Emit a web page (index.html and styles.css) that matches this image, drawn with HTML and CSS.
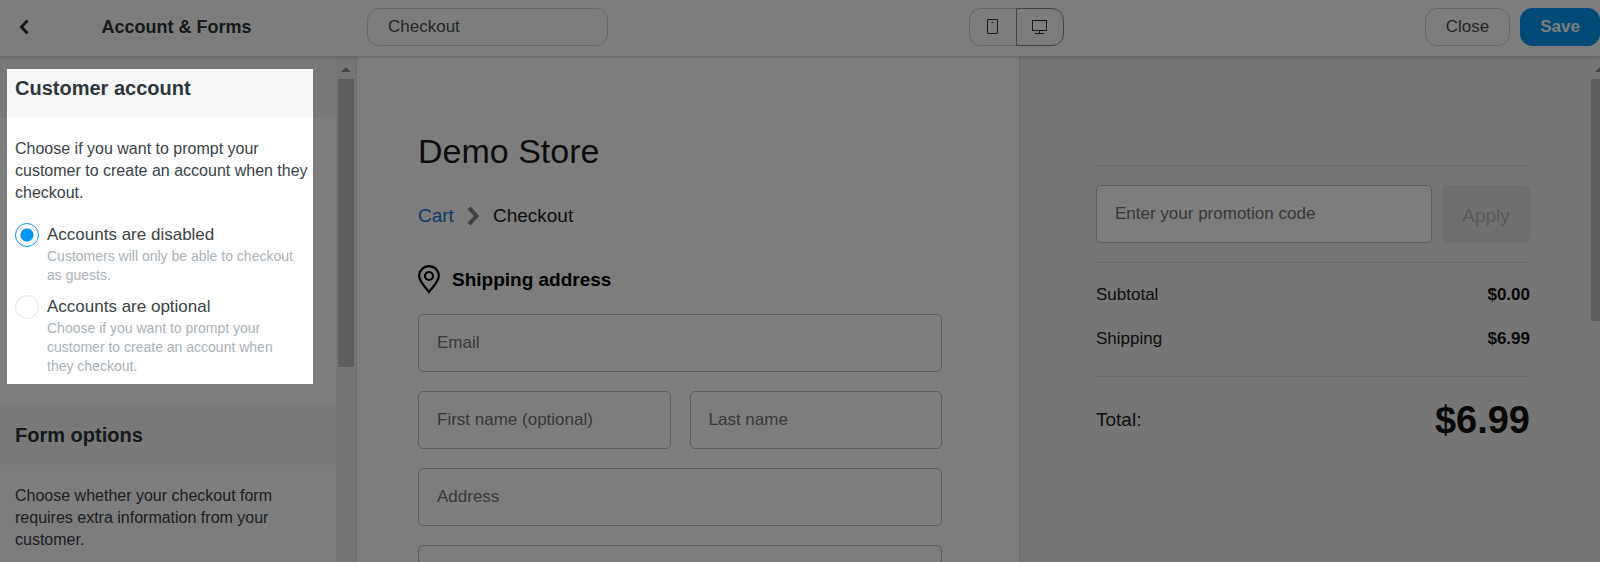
FILE: index.html
```html
<!DOCTYPE html>
<html lang="en">
<head>
<meta charset="utf-8">
<title>Account &amp; Forms</title>
<link rel="stylesheet" href="styles.css">
</head>
<body>
<div class="app">
  <header class="topbar">
    <div class="topbar-nav">
      <button class="back" type="button" aria-label="Back">
        <svg width="10" height="16" viewBox="0 0 10 16" fill="none" stroke="currentColor" stroke-width="3"><path d="M8.500 1.500 2.500 8l6 6.500"/></svg>
      </button>
      <h1 class="topbar-title">Account &amp; Forms</h1>
    </div>
    <div class="topbar-tools">
      <input class="page-name" type="text" value="Checkout" aria-label="Page">
      <div class="devices">
        <button class="device" type="button" aria-label="Mobile">
          <svg width="12" height="16" viewBox="0 0 12 16" fill="none" stroke="currentColor"><rect x="0.500" y="0.500" width="10" height="14" rx="0.500"/><path d="M4.500 3.500h2"/></svg>
        </button>
        <button class="device device-active" type="button" aria-label="Desktop">
          <svg width="16" height="16" viewBox="0 0 16 16" fill="none" stroke="currentColor"><rect x="0.500" y="1.500" width="14" height="10"/><path d="M7.500 12v2M3 14.500h9"/></svg>
        </button>
      </div>
      <div class="actions">
        <button class="btn btn-close" type="button">Close</button>
        <button class="btn btn-save" type="button">Save</button>
      </div>
    </div>
  </header>

  <div class="workspace">
    <aside class="sidebar">
      <div class="settings">
        <h2 class="section-title">Customer account</h2>
        <div class="section-body">
          <p class="lead">Choose if you want to prompt your customer to create an account when they checkout.</p>
          <div class="option">
            <input class="radio" type="radio" name="accounts" id="acc-disabled" checked>
            <div>
              <label class="option-label" for="acc-disabled">Accounts are disabled</label>
              <p class="hint">Customers will only be able to checkout as guests.</p>
            </div>
          </div>
          <div class="option">
            <input class="radio" type="radio" name="accounts" id="acc-optional">
            <div>
              <label class="option-label" for="acc-optional">Accounts are optional</label>
              <p class="hint">Choose if you want to prompt your customer to create an account when they checkout.</p>
            </div>
          </div>
        </div>
        <h2 class="section-title">Form options</h2>
        <div class="section-body">
          <p class="lead">Choose whether your checkout form requires extra information from your customer.</p>
        </div>
      </div>
      <div class="scrollbar"><span class="arrow"></span><span class="thumb"></span></div>
    </aside>

    <main class="preview">
      <section class="checkout">
        <h2 class="store">Demo Store</h2>
        <nav class="crumbs">
          <a href="#cart">Cart</a>
          <svg width="13" height="20" viewBox="0 0 13 20" fill="none" stroke="currentColor" stroke-width="4"><path d="M2 1.800 9.500 10 2 18.200"/></svg>
          <span>Checkout</span>
        </nav>
        <h3 class="address-title">
          <svg width="22" height="29" viewBox="0 0 22 29" fill="none" stroke="currentColor" stroke-width="2.200"><path d="M11 27C7.500 22.500 1.200 16.500 1.200 11a9.800 9.800 0 0 1 19.600 0c0 5.500-6.300 11.500-9.800 16z"/><circle cx="11" cy="11" r="4"/></svg>
          Shipping address
        </h3>
        <form class="fields">
          <input class="field wide" type="email" placeholder="Email" aria-label="Email">
          <input class="field" type="text" placeholder="First name (optional)" aria-label="First name (optional)">
          <input class="field" type="text" placeholder="Last name" aria-label="Last name">
          <input class="field wide" type="text" placeholder="Address" aria-label="Address">
          <input class="field wide" type="text" aria-label="Address line 2">
        </form>
      </section>
      <section class="summary">
        <div class="promo">
          <input class="field" type="text" placeholder="Enter your promotion code" aria-label="Promotion code">
          <button class="apply" type="button" disabled>Apply</button>
        </div>
        <dl class="amounts">
          <div class="amount"><dt>Subtotal</dt><dd>$0.00</dd></div>
          <div class="amount"><dt>Shipping</dt><dd>$6.99</dd></div>
        </dl>
        <dl class="total"><dt>Total:</dt><dd>$6.99</dd></dl>
      </section>
      <div class="scrollbar scrollbar-page"><span class="arrow"></span><span class="thumb"></span></div>
    </main>
  </div>
  <div class="spotlight"></div>
</div>
</body>
</html>
```

FILE: styles.css
```css
* { box-sizing: border-box; }

body, h1, h2, h3, p, dl, dd { margin: 0; }

body, button, input {
  font-family: "Liberation Sans", Arial, sans-serif;
  font-size: 17px;
}

body { color: #394246; background: #fff; }
button { cursor: pointer; }

.app {
  position: relative;
  display: flex;
  flex-direction: column;
  height: 100vh;
  overflow: hidden;
}

/* Top bar */
.topbar {
  display: flex;
  flex: none;
  align-items: center;
  padding: 8px 0 10px;
  border-bottom: 1px solid #d8d8d8;
  box-shadow: 0 1px 3px rgba(0, 0, 0, 0.12);
  z-index: 1;
}
.topbar-nav { display: flex; align-items: center; width: 356px; padding-left: 19px; }
.back { display: flex; padding: 0; border: 0; background: none; color: #2b3036; }
.topbar-title {
  flex: 1;
  margin-right: 32px;
  text-align: center;
  font-size: 18px;
  line-height: 20px;
  color: #2d363b;
}
.topbar-tools { display: flex; flex: 1; align-items: center; justify-content: space-between; padding-left: 11px; }
.page-name {
  width: 241px;
  height: 38px;
  padding: 0 20px;
  border: 1px solid #d3d3d3;
  border-radius: 12px;
  background: #fff;
  color: #4a4f52;
}
.devices { display: flex; }
.device {
  display: flex;
  align-items: center;
  justify-content: center;
  width: 47px;
  height: 38px;
  padding: 0;
  border: 1px solid #d3d3d3;
  border-right: 0;
  border-radius: 12px 0 0 12px;
  background: #fff;
  color: #2d3538;
}
.device-active { width: 48px; border: 1px solid #8c9296; border-radius: 0 12px 12px 0; }
.actions { display: flex; gap: 10px; }
.btn { height: 38px; border: 1px solid #d3d3d3; border-radius: 12px; background: #fff; color: #4a4f52; }
.btn-close { width: 85px; }
.btn-save { width: 80px; border-color: #0097f3; background: #0097f3; color: #fff; font-weight: bold; }

/* Settings sidebar */
.workspace { display: flex; flex: 1; min-height: 0; }
.sidebar { display: flex; flex: none; width: 357px; border-right: 1px solid #e3e3e3; overflow: hidden; }
.settings { flex: 1; padding-top: 1px; background: #f6f7f7; }
.section-title {
  padding: 18px 15px;
  background: #f6f7f7;
  font-size: 20px;
  line-height: 24px;
  color: #2d363b;
}
.section-body { padding: 20px 15px; background: #fff; }
.lead { padding-right: 10px; font-size: 16px; line-height: 22px; margin-bottom: 18px; }
.option { display: flex; gap: 8px; margin-bottom: 4px; }
.radio {
  appearance: none;
  flex: none;
  width: 24px;
  height: 24px;
  margin: 1px 0 0;
  border: 1px solid #e1e4e6;
  border-radius: 50%;
  background: #fff;
}
.radio:checked {
  border-color: #0097f3;
  background: radial-gradient(circle, #0097f3 6px, #fff 7px);
}
.option-label { display: block; line-height: 25px; }
.hint { padding: 0 20px 5px 0; font-size: 14px; line-height: 19px; color: #a8b1b7; }

/* Scrollbars */
.scrollbar {
  display: flex;
  flex: none;
  flex-direction: column;
  align-items: center;
  width: 20px;
  background: #f0f0f0;
}
.arrow {
  margin: 10px 0 7px;
  border: 5px solid transparent;
  border-top: 0;
  border-bottom-color: #8b8b8b;
}
.thumb { width: 16px; height: 57%; background: #c0c0c0; }
.scrollbar-page { width: 9px; align-items: flex-start; overflow: hidden; }
.scrollbar-page .arrow { margin-left: 4px; }
.scrollbar-page .thumb { height: 48%; }

/* Checkout preview */
.preview {
  display: grid;
  flex: 1;
  grid-template-columns: minmax(0, 663fr) minmax(0, 571fr) 9px;
  grid-template-rows: minmax(0, 1fr);
  min-width: 0;
  color: #1c1c1c;
}
.checkout { padding: 74px 77px 0 61px; border-right: 1px solid #dedede; }
.store { font-size: 34px; font-weight: normal; line-height: 40px; }
.crumbs { display: flex; align-items: center; gap: 13px; margin-top: 33px; font-size: 19px; line-height: 24px; }
.crumbs a { color: #1976d2; text-decoration: none; }
.crumbs svg { color: #858585; }
.address-title {
  display: flex;
  align-items: center;
  gap: 12px;
  margin: 37px 0 20px;
  font-size: 19px;
  line-height: 29px;
  color: #000;
}
.fields { display: grid; grid-template-columns: 1fr 1fr; gap: 19px; }
.field {
  width: 100%;
  min-width: 0;
  height: 58px;
  padding: 0 18px;
  border: 1px solid #bdbdbd;
  border-radius: 5px;
  background: #fff;
}
.field::placeholder { color: #737373; }
.wide { grid-column: 1 / -1; }

/* Order summary */
.summary { padding: 108px 61px 0 76px; background: #f0f0f0; }
.promo, .amounts { border-top: 1px solid #dadada; padding: 19px 0; }
.promo { display: flex; gap: 10px; }
.apply {
  flex: none;
  width: 88px;
  padding: 4px 0 0;
  border: 0;
  border-radius: 6px;
  background: #e2e2e2;
  color: #b4b4b4;
  font-size: 19px;
}
.amount { display: flex; justify-content: space-between; line-height: 24px; }
.amounts .amount + .amount { margin-top: 20px; }
.amounts { padding: 20px 0 25px; border-bottom: 1px solid #dadada; }
.amount dd, .total dd { font-weight: bold; color: #111; }
.total { display: flex; align-items: center; justify-content: space-between; margin-top: 20px; font-size: 19px; line-height: 46px; }
.total dd { font-size: 38px; }

/* Tour highlight over the customer account section */
.spotlight {
  position: absolute;
  top: 69px;
  left: 7px;
  width: 306px;
  height: 315px;
  box-shadow: 0 0 0 9999px rgba(0, 0, 0, 0.51);
  pointer-events: none;
  z-index: 2;
}
```
